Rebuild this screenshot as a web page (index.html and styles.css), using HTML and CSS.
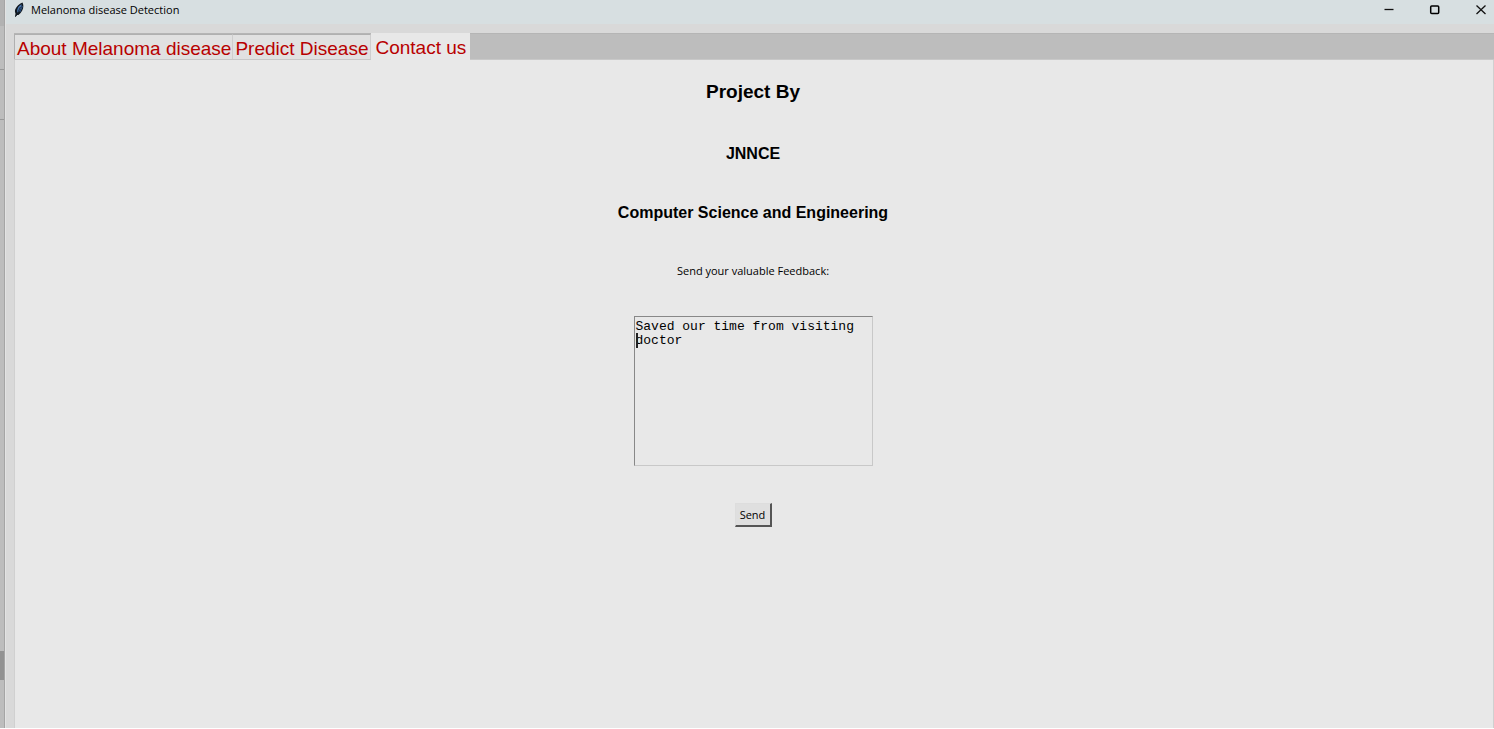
FILE: index.html
```html
<!DOCTYPE html>
<html lang="en">
<head>
<meta charset="utf-8">
<title>Melanoma disease Detection</title>
<link rel="stylesheet" href="styles.css">
</head>
<body>
<div class="desktop">
  <div class="backdrop" aria-hidden="true">
    <span class="backdrop-head"></span>
    <span class="backdrop-row"></span>
    <span class="backdrop-gap"></span>
    <span class="backdrop-thumb"></span>
    <span class="backdrop-end"></span>
  </div>
  <div class="window">
    <header class="titlebar">
      <svg class="feather" width="10" height="16" viewBox="0 0 10 16" aria-hidden="true">
        <path d="M1 15 1.500 11.500C-.5 8 3 3 8.500 .5 10.500 4 9 10 4.500 13L3 13 1.500 15Z" fill="#101820"/>
        <path d="M3 10C3 6 5 3.500 7.500 2.300 8 5 6 9 3.500 11Z" fill="#4774ad"/>
        <path d="M2 14 6.500 5" stroke="#101820" stroke-width=".8"/>
        <path d="M6 10 8.500 4" stroke="#294f80" stroke-width="1"/>
      </svg>
      <span class="title">Melanoma disease Detection</span>
      <div class="controls">
        <button class="control" aria-label="Minimize"><svg width="12" height="12" viewBox="0 0 12 12"><path d="M1.500 5.500H10.500" stroke="#111" stroke-width="1.300"/></svg></button>
        <button class="control" aria-label="Maximize"><svg width="12" height="12" viewBox="0 0 12 12"><rect x="1.700" y="2" width="8" height="7.500" rx="1" fill="none" stroke="#000" stroke-width="1.500"/></svg></button>
        <button class="control" aria-label="Close"><svg width="12" height="12" viewBox="0 0 12 12"><path d="M1.500 1.500 10.500 10M10.500 1.500 1.500 10" stroke="#111" stroke-width="1.300"/></svg></button>
      </div>
    </header>
    <main class="notebook">
      <nav class="tabs" role="tablist">
        <button class="tab tab-first" role="tab" aria-selected="false">About Melanoma disease</button>
        <button class="tab" role="tab" aria-selected="false">Predict Disease</button>
        <button class="tab tab-active" role="tab" aria-selected="true">Contact us</button>
      </nav>
      <section class="panel">
        <h1 class="heading">Project By</h1>
        <h2 class="college">JNNCE</h2>
        <h3 class="department">Computer Science and Engineering</h3>
        <label class="prompt" for="feedback">Send your valuable Feedback:</label>
        <div class="editor">
          <textarea class="feedback" id="feedback" spellcheck="false">Saved our time from visiting doctor</textarea>
          <span class="caret"></span>
        </div>
        <button class="send">Send</button>
      </section>
    </main>
  </div>
</div>
</body>
</html>
```
FILE: styles.css
```css
* {
  box-sizing: border-box;
}

body {
  margin: 0;
  background: #fff;
  font-family: "Liberation Sans", Arial, sans-serif;
}

button {
  font: inherit;
  margin: 0;
  padding: 0;
  border: 0;
  background: none;
}

.desktop {
  display: flex;
  height: 100vh;
  padding-bottom: 1px;
}

.backdrop {
  display: flex;
  flex-direction: column;
  flex: 0 0 5px;
  background: #bdbdbd;
  border-right: 1px solid #a5a5a5;
}

.backdrop-head {
  flex: 0 0 26px;
  background: #b2b2b2;
}

.backdrop-row {
  flex: 0 0 94px;
  background: linear-gradient(#999, #999) 0 43px / 100% 1px no-repeat, #bdbdbd;
  border-bottom: 1px solid #999;
}

.backdrop-gap {
  flex: 1;
}

.backdrop-thumb {
  flex: 0 0 29px;
  background: #929292;
}

.backdrop-end {
  flex: 0 0 48px;
}

.window {
  display: flex;
  flex-direction: column;
  flex: 1;
  min-width: 0;
  background: #d9d9d9;
  border-left: 1px solid #e3e3e3;
}

.titlebar {
  display: flex;
  align-items: center;
  height: 24px;
  padding: 0 7px 5px 8px;
  background: #d7dfe1;
}

.title {
  margin-left: 7px;
  font: 500 11px/16px "Open Sans", sans-serif;
  color: #000;
}

.controls {
  display: flex;
  gap: 34px;
  margin-left: auto;
}

.control {
  display: flex;
}

.notebook {
  display: flex;
  flex-direction: column;
  flex: 1;
  padding: 9px 0 0 8px;
}

.tabs {
  display: flex;
  height: 27px;
  background: #bdbdbd;
  border-top: 1px solid #b5b5b5;
  border-bottom: 1px solid #c8c8c8;
}

.tab {
  height: 25px;
  padding: 4px 2px 0;
  border-top: 1px solid #b0b0b0;
  border-right: 1px solid #cecece;
  background: #e1e1e1;
  color: #b80000;
  font-size: 19px;
  line-height: 20px;
  white-space: nowrap;
}

.tab-first {
  padding-right: 1px;
  border-left: 1px solid #b0b0b0;
}

.tab-active {
  height: 27px;
  margin-top: -1px;
  padding: 3px 4px 0;
  border: 0;
  background: #e8e8e8;
}

.panel {
  display: flex;
  flex-direction: column;
  align-items: center;
  flex: 1;
  padding: 20px 2px 0 0;
  background: #e8e8e8;
  border-left: 1px solid #d0d0d0;
  border-right: 1px solid #d0d0d0;
  color: #000;
}

.heading {
  margin: 0 0 40px;
  font-size: 19px;
  line-height: 24px;
}

.college {
  margin: 0 0 40px;
  font-size: 16px;
  line-height: 20px;
}

.department {
  margin: 0 0 41px;
  font-size: 16px;
  line-height: 18px;
}

.prompt {
  margin-bottom: 37px;
  font: 500 11px/16px "Open Sans", sans-serif;
}

.editor {
  position: relative;
  display: flex;
  margin-bottom: 37px;
}

.feedback {
  width: 239px;
  height: 150px;
  padding: 3px 1px;
  border: 1px solid;
  border-color: #888 #c8c8c8 #c8c8c8 #888;
  border-radius: 0;
  background: #e8e8e8;
  color: #000;
  font: 13px/14px "Liberation Mono", "Courier New", monospace;
  resize: none;
  outline: 0;
}

.caret {
  position: absolute;
  left: 2px;
  top: 17px;
  width: 2px;
  height: 15px;
  background: #222;
}

.send {
  width: 37px;
  height: 24px;
  border: 1px solid;
  border-color: #ddd #555 #555 #ddd;
  border-right-width: 2px;
  border-bottom-width: 2px;
  background: #dfdfdf;
  color: #000;
  font: 500 11px/18px "Open Sans", sans-serif;
}
```
